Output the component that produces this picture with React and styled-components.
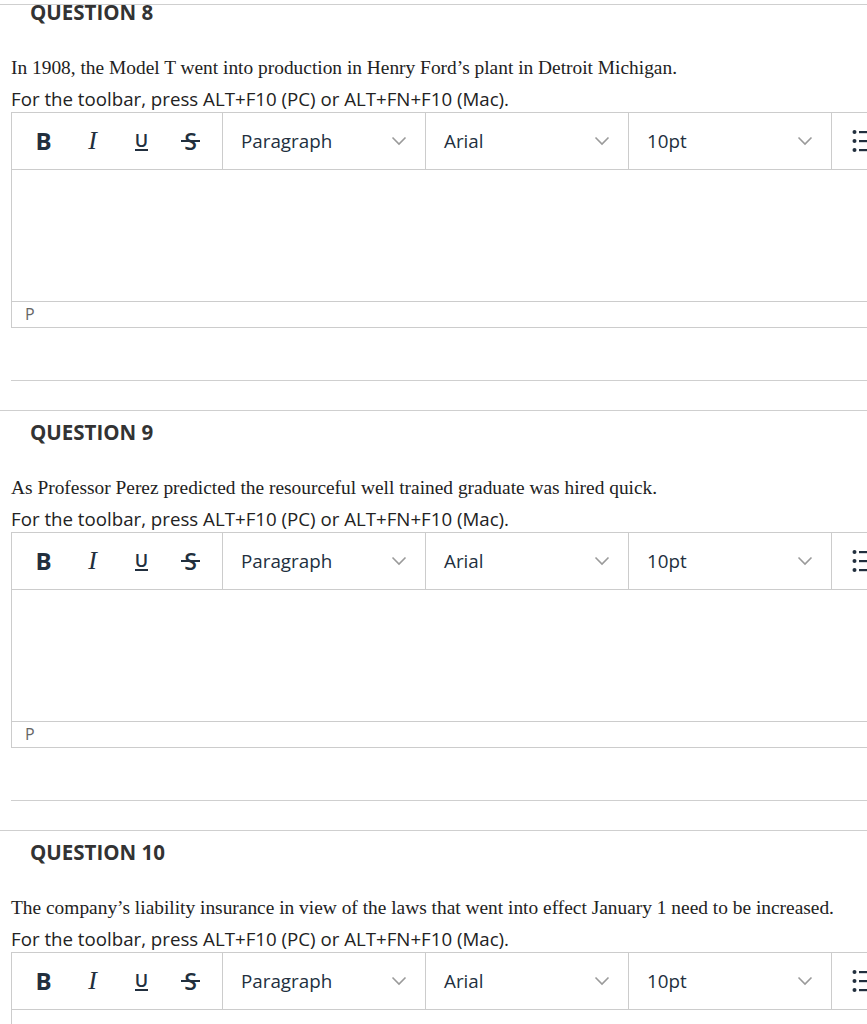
import styled, { createGlobalStyle } from "styled-components";

const questions = [
  {
    number: 8,
    text: "In 1908, the Model T went into production in Henry Ford’s plant in Detroit Michigan.",
  },
  {
    number: 9,
    text: "As Professor Perez predicted the resourceful well trained graduate was hired quick.",
  },
  {
    number: 10,
    text: "The company’s liability insurance in view of the laws that went into effect January 1 need to be increased.",
  },
];

const dropdowns = ["Paragraph", "Arial", "10pt"];

function Chevron() {
  return (
    <svg width="16" height="10" viewBox="0 0 16 10">
      <polyline
        points="1.5,1.5 8,8 14.5,1.5"
        fill="none"
        stroke="#9a9a9a"
        strokeWidth="1.6"
      />
    </svg>
  );
}

function ListIcon() {
  return (
    <svg width="24" height="24" viewBox="0 0 24 24">
      <circle cx="3.5" cy="3" r="2" fill="#222f3e" />
      <circle cx="3.5" cy="12" r="2" fill="#222f3e" />
      <circle cx="3.5" cy="21" r="2" fill="#222f3e" />
      <rect x="8" y="2" width="16" height="2.2" fill="#222f3e" />
      <rect x="8" y="11" width="16" height="2.2" fill="#222f3e" />
      <rect x="8" y="20" width="16" height="2.2" fill="#222f3e" />
    </svg>
  );
}

function Question({ number, text, first }) {
  return (
    <Section $first={first}>
      <Heading $first={first}>QUESTION {number}</Heading>
      <Prompt>{text}</Prompt>
      <Instructions>For the toolbar, press ALT+F10 (PC) or ALT+FN+F10 (Mac).</Instructions>
      <Editor>
        <Toolbar>
          <ButtonGroup>
            <FormatButton>
              <BoldGlyph>B</BoldGlyph>
            </FormatButton>
            <FormatButton>
              <ItalicGlyph>I</ItalicGlyph>
            </FormatButton>
            <FormatButton>
              <UnderlineGlyph>U</UnderlineGlyph>
            </FormatButton>
            <FormatButton>
              <StrikeGlyph>S</StrikeGlyph>
            </FormatButton>
          </ButtonGroup>
          {dropdowns.map((label) => (
            <Dropdown key={label}>
              <span>{label}</span>
              <Chevron />
            </Dropdown>
          ))}
          <ListButton>
            <ListIcon />
          </ListButton>
        </Toolbar>
        <EditArea />
        <StatusBar>p</StatusBar>
      </Editor>
      <AnswerRule />
    </Section>
  );
}

export default function App() {
  return (
    <>
      <GlobalStyle />
      <Page>
        {questions.map((q, i) => (
          <Question key={q.number} number={q.number} text={q.text} first={i === 0} />
        ))}
      </Page>
    </>
  );
}

const GlobalStyle = createGlobalStyle`
  html, body {
    margin: 0;
    padding: 0;
    background: #fff;
    overflow: hidden;
  }
`;

const Page = styled.div`
  width: 940px;
  padding-top: 4px;
`;

const Section = styled.section`
  border-top: 1.5px solid #cfcfcf;
  padding-top: ${({ $first }) => ($first ? 0 : 7)}px;
  padding-bottom: 29px;
`;

const Heading = styled.h2`
  margin: ${({ $first }) => ($first ? "-7px" : "0")} 0 0 30px;
  font-family: "Open Sans", sans-serif;
  font-weight: 700;
  font-size: 20.5px;
  line-height: 28px;
  color: #333;
`;

const Prompt = styled.p`
  margin: 30px 0 0 11px;
  font-family: "Liberation Serif", serif;
  font-size: 19.4px;
  line-height: 24px;
  color: #222;
`;

const Instructions = styled.p`
  margin: 7px 0 0 11px;
  font-family: "Open Sans", sans-serif;
  font-size: 18.7px;
  line-height: 23px;
  color: #222;
`;

const Editor = styled.div`
  margin: 2px 0 0 11px;
  border: 1px solid #cccccc;
  border-right: none;
`;

const Toolbar = styled.div`
  display: flex;
  height: 56px;
  border-bottom: 1px solid #cccccc;
`;

const ButtonGroup = styled.div`
  display: flex;
  align-items: center;
  padding: 0 7px;
  border-right: 1px solid #cccccc;
`;

const FormatButton = styled.div`
  width: 49px;
  height: 40px;
  display: flex;
  align-items: center;
  justify-content: center;
  color: #222f3e;
`;

const BoldGlyph = styled.span`
  font-family: "Open Sans", sans-serif;
  font-weight: 700;
  font-size: 24px;
  line-height: 1;
`;

const ItalicGlyph = styled.span`
  font-family: "Liberation Serif", serif;
  font-style: italic;
  font-size: 26px;
  line-height: 1;
`;

const UnderlineGlyph = styled.span`
  font-family: "Open Sans", sans-serif;
  font-weight: 600;
  font-size: 18px;
  line-height: 16px;
  padding: 0 0 1px;
  border-bottom: 2.5px solid #222f3e;
`;

const StrikeGlyph = styled.span`
  position: relative;
  font-family: "Open Sans", sans-serif;
  font-weight: 600;
  font-size: 23px;
  line-height: 1;
  &::after {
    content: "";
    position: absolute;
    left: -3px;
    right: -3px;
    top: 50%;
    height: 2.2px;
    margin-top: -1px;
    background: #222f3e;
  }
`;

const Dropdown = styled.div`
  width: 166px;
  display: flex;
  align-items: center;
  justify-content: space-between;
  padding: 0 18px;
  border-right: 1px solid #cccccc;
  font-family: "Open Sans", sans-serif;
  font-size: 18.8px;
  color: #222f3e;
`;

const ListButton = styled.div`
  display: flex;
  align-items: center;
  padding-left: 19px;
`;

const EditArea = styled.div`
  height: 131px;
`;

const StatusBar = styled.div`
  height: 25px;
  border-top: 1px solid #cccccc;
  padding-left: 13px;
  font-family: "Open Sans", sans-serif;
  font-size: 16px;
  line-height: 25px;
  color: #666;
  text-transform: uppercase;
`;

const AnswerRule = styled.div`
  margin: 52px 0 0 11px;
  border-bottom: 1.5px solid #cfcfcf;
`;
